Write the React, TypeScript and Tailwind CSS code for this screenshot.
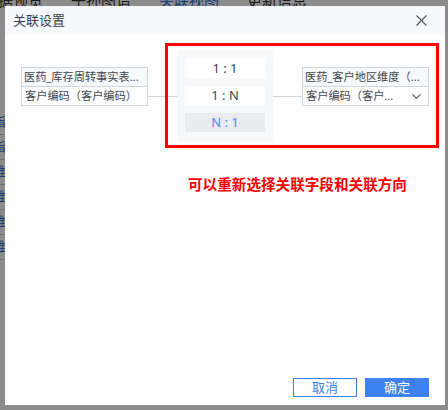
import { ChevronDown, X } from "lucide-react"

const tabs = ["数据预览", "子孙图谱", "关联视图", "更新信息"]
const rows = ["指", "指", "维", "维", "维", "维"]
const relations = ["1 : 1", "1 : N", "N : 1"]

function FieldTable({ title, field, select }: { title: string; field: string; select?: boolean }) {
    return (
        <div className="mt-[16px] w-[127px] border border-[#cfd5dd] text-[11.2px] leading-[18px] text-[#3f4650]">
            <div className="h-[19px] overflow-hidden whitespace-nowrap border-b border-[#cfd5dd] bg-[#f8f9fb] pl-[2px]">{title}</div>
            <div className="flex h-[18px] items-center justify-between pl-[3px] pr-[4px]">
                <span className="overflow-hidden whitespace-nowrap">{field}</span>
                {select && <ChevronDown size={15} strokeWidth={1.7} className="shrink-0 text-[#4d5560]" />}
            </div>
        </div>
    )
}

export default function App() {
    return (
        <div
            className="relative h-[410px] w-[448px] overflow-hidden bg-white"
            style={{ fontFamily: '"Noto Sans", "Noto Sans CJK SC", sans-serif' }}
        >
            {/* page behind the modal */}
            <div className="-mt-[11px] flex gap-[28px] text-[15px] text-[#333]">
                {tabs.map((t, i) => (
                    <span key={t} className={i === 0 ? "-ml-[17px]" : i === 2 ? "text-[#2f6fd6]" : ""}>
                        {t}
                    </span>
                ))}
            </div>
            <div className="mt-[98px] w-[40px]">
                {rows.map((r, i) => (
                    <div key={i} className="flex h-[25px] items-center border-b border-[#ccc] text-[13px] text-[#2f6fd6]">
                        <span className="-ml-[7px]">{r}</span>
                    </div>
                ))}
            </div>

            <div className="absolute inset-0 bg-black/45" />

            {/* modal */}
            <div className="absolute left-[5px] top-[6px] flex h-[399px] w-[440px] flex-col bg-white">
                <div className="flex h-[29px] shrink-0 items-center justify-between bg-[#f7f9fc] pl-[8px] pr-[14px]">
                    <span className="text-[13px] text-[#3c4048]">关联设置</span>
                    <X size={19} strokeWidth={1.4} className="text-[#4d5560]" />
                </div>

                <div className="flex flex-1 items-start pl-[16px] pt-[16px]">
                    <FieldTable title="医药_库存周转事实表..." field="客户编码（客户编码）" />
                    <div className="mt-[45px] h-px w-[29px] bg-[#cfd5dd]" />
                    <div className="flex h-[90px] w-[96px] flex-col gap-[8px] bg-[#f7f8fa] px-[8px] pt-[8px] text-[13px]">
                        {relations.map((r, i) => (
                            <div
                                key={r}
                                className={
                                    i === 2
                                        ? "flex h-[19px] items-center justify-center whitespace-pre bg-[#e9ebee] text-[#4a8af4]"
                                        : "flex h-[19px] items-center justify-center whitespace-pre bg-white text-[#444]"
                                }
                            >
                                {r}
                            </div>
                        ))}
                    </div>
                    <div className="mt-[45px] h-px w-[29px] bg-[#cfd5dd]" />
                    <FieldTable title="医药_客户地区维度（..." field="客户编码（客户..." select />
                </div>

                <div className="flex shrink-0 justify-end gap-[8px] pb-[8px] pr-[16px] text-[13px]">
                    <button className="flex h-[19px] w-[64px] items-center justify-center border border-[#3d7fe8] text-[#3d7fe8]">
                        取消
                    </button>
                    <button className="flex h-[19px] w-[64px] items-center justify-center bg-[#3d82ee] text-white">
                        确定
                    </button>
                </div>

                {/* annotation */}
                <div className="absolute left-[160px] top-[37px] h-[105px] w-[274px] border-[3px] border-[#ff0000]" />
                <div className="absolute left-[183px] top-[168px] text-[14.6px] font-bold text-[#ff0000]">
                    可以重新选择关联字段和关联方向
                </div>
            </div>
        </div>
    )
}
